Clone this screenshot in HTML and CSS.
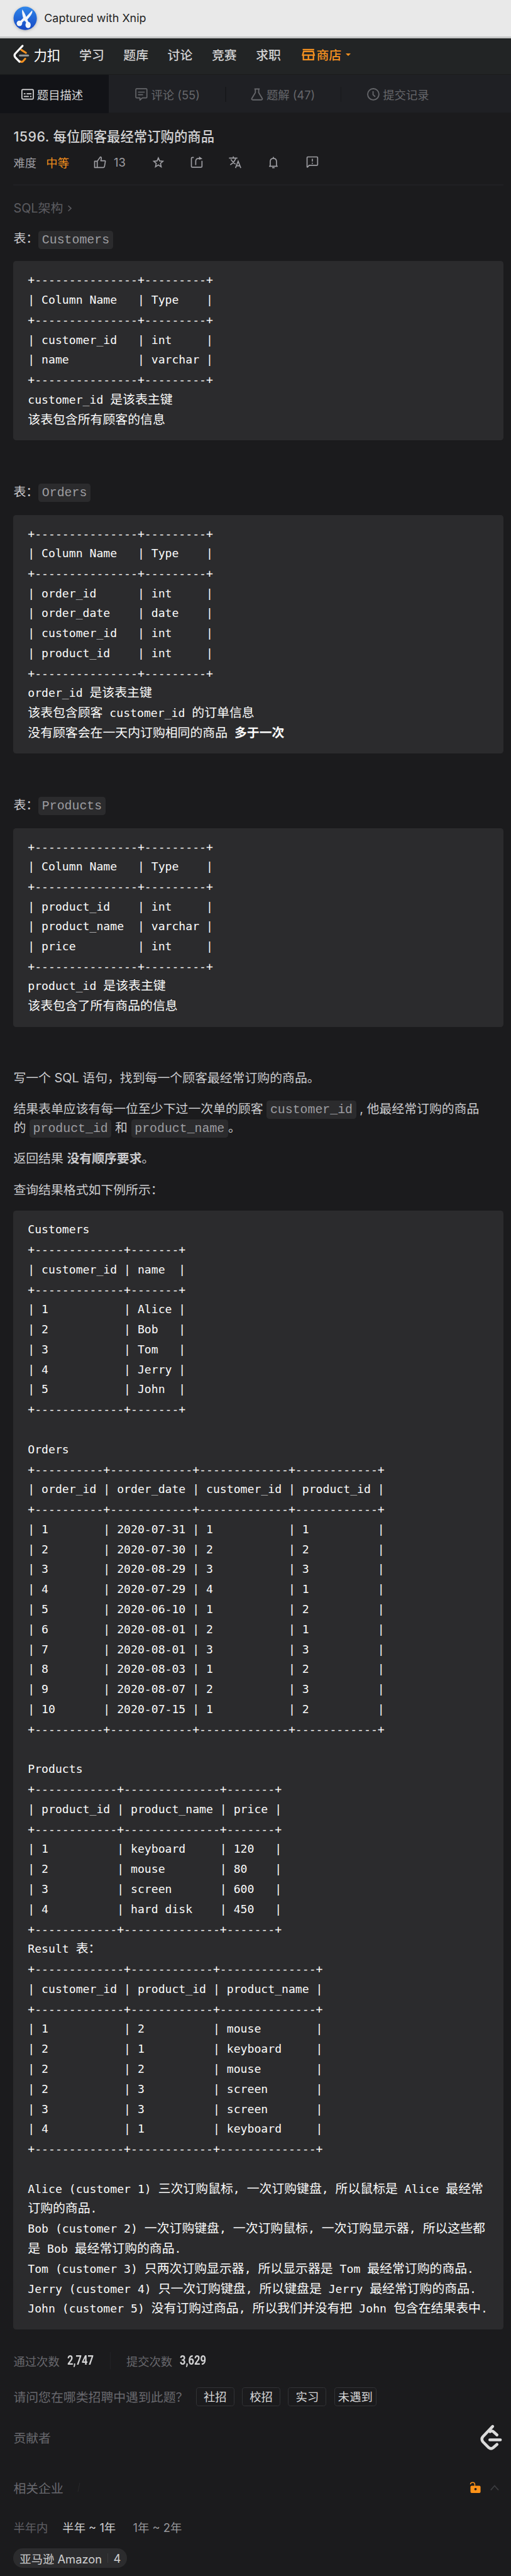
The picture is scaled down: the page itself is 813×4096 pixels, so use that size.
FILE: index.html
```html
<!DOCTYPE html>
<html lang="zh-CN">
<head>
<meta charset="utf-8">
<title>1596. 每位顾客最经常订购的商品 - 力扣</title>
<link rel="stylesheet" href="styles.css">
</head>
<body>
<div class="capture-bar">
  <svg class="capture-icon" viewBox="0 0 50 50">
    <defs><linearGradient id="disc" x1="0" y1="0" x2="0" y2="1"><stop offset="0" stop-color="#2f86ea"/><stop offset="1" stop-color="#1648c4"/></linearGradient></defs>
    <circle cx="25" cy="25" r="24.3" fill="url(#disc)"/>
    <path d="M19 6.500C22 11 25.500 17 27 22L39.500 8.500C41 13 38 18 29.500 27.500L25 32L21.500 27C19.500 20 17.500 12 19 6.500Z" fill="#f2f5fb"/>
    <path d="M24 25L16 33M27 28L30 35" stroke="#f2f5fb" stroke-width="5"/>
    <circle cx="13" cy="35.500" r="5.800" fill="#f2f5fb"/>
    <ellipse cx="31" cy="39" rx="5.500" ry="6.500" fill="#f2f5fb"/>
  </svg>
  <span>Captured with Xnip</span>
</div>

<nav class="site-nav">
  <div class="brand">
    <svg class="brand-mark" viewBox="0 0 34 40">
      <path d="M17 11L26.500 17M14 34.500Q17 37 20 35L25 29.500" fill="none" stroke="#f59120" stroke-width="4.200" stroke-linecap="round" stroke-linejoin="round"/>
      <path d="M14 22.500H31" stroke="#9b9b9b" stroke-width="4" stroke-linecap="round"/>
      <path d="M19.500 2.500L4 19Q1.500 22.500 4 26L13 35.500" fill="none" stroke="#fff" stroke-width="4.200" stroke-linecap="round"/>
    </svg>
    <span class="brand-name">力扣</span>
  </div>
  <a class="nav-link">学习</a>
  <a class="nav-link">题库</a>
  <a class="nav-link">讨论</a>
  <a class="nav-link">竞赛</a>
  <a class="nav-link">求职</a>
  <a class="store">
    <svg class="store-icon" viewBox="0 0 28 26"><path d="M2 2.500H26" stroke="#f59120" stroke-width="3"/><path d="M4 6.500H24L26 14H2ZM3.500 13V23.500H24.500V13M14 14V23" fill="none" stroke="#f59120" stroke-width="3"/></svg>
    <span>商店</span>
    <i class="caret-down"></i>
  </a>
</nav>

<div class="tabs">
  <div class="tab tab-active">
    <svg class="tab-icon" viewBox="0 0 26 26" fill="none" stroke="currentColor" stroke-width="2.200"><rect x="1.100" y="3" width="23.800" height="20" rx="2"/><path d="M5 12H8.500M11 12H21M5 17.500H15.500M18 17.500H21"/></svg>
    <span>题目描述</span>
  </div>
  <div class="tab">
    <svg class="tab-icon" viewBox="0 0 26 26" fill="none" stroke="currentColor" stroke-width="2.200" stroke-linejoin="round"><path d="M1.500 3Q1.500 1.500 3 1.500H23Q24.500 1.500 24.500 3V19Q24.500 20.500 23 20.500H15L10 25V20.500H3Q1.500 20.500 1.500 19ZM6 8.500H20M6 13.800H16.500"/></svg>
    <span>评论 (55)</span>
  </div>
  <div class="tab tab-ruled">
    <svg class="tab-icon" viewBox="0 0 26 26" fill="none" stroke="currentColor" stroke-width="2.400" stroke-linejoin="round"><path d="M7.500 2H18.500M9.500 2V9.500L2 22Q1.500 24.500 4 24.500H22Q24.500 24.500 24 22L16.500 9.500V2"/></svg>
    <span>题解 (47)</span>
  </div>
  <div class="tab tab-ruled">
    <svg class="tab-icon" viewBox="0 0 26 26" fill="none" stroke="currentColor" stroke-width="2.400"><circle cx="13" cy="13" r="11.700"/><path d="M12.500 6.500V14L17 18"/></svg>
    <span>提交记录</span>
  </div>
</div>

<main class="content">
  <h1 class="title"><span class="number">1596.</span> 每位顾客最经常订购的商品</h1>
  <div class="meta">
    <span class="level-label">难度</span>
    <span class="level">中等</span>
    <svg class="meta-icon thumb" viewBox="0 0 26 26" fill="none" stroke="currentColor" stroke-width="2.200" stroke-linejoin="round"><path d="M2 11H7.500V24H2ZM7.500 11L14 2Q16.500 2 16 5L15 10H23.500Q24.500 10 24.300 11.500L22.500 22Q22 24 20.500 24H7.500"/></svg>
    <span class="likes">13</span>
    <span class="actions">
      <svg class="meta-icon" viewBox="0 0 26 26" fill="none" stroke="currentColor" stroke-width="2.200"><path d="M13 4L15.700 10.300L22.500 10.900L17.400 15.400L18.900 22.500L13 18.800L7.100 22.500L8.600 15.400L3.500 10.900L10.300 10.300Z"/></svg>
      <svg class="meta-icon" viewBox="0 0 26 26" fill="none" stroke="currentColor" stroke-width="2.200"><path d="M7 3H4Q2 3 2 5V21.500Q2 23.500 4 23.500H22Q24 23.500 24 21.500V10M11 19V11Q11 5.500 16 5.500H21"/><path d="M18 1L25 6L18 8Z" fill="currentColor" stroke="none"/></svg>
      <svg class="meta-icon" viewBox="0 0 26 26" fill="none" stroke="currentColor" stroke-width="2.200"><path d="M.5 4.500H18M9.500 1V4.500M14.500 4.500Q12 13 3 18.500M4.500 7Q8 13.500 14 17M14 25L19.500 11L25 25M16 20.500H23.500"/></svg>
      <svg class="meta-icon" viewBox="0 0 26 26" fill="none" stroke="currentColor" stroke-width="2.200"><path d="M4 21.500H22M6.500 21V12Q6.500 5 13 5Q19.500 5 19.500 12V21M13 2V5M10.500 24.500H15.500"/></svg>
      <svg class="meta-icon" viewBox="0 0 26 26" fill="none" stroke="currentColor" stroke-width="2.200"><path d="M2 24V3.500Q2 2 3.500 2H22.500Q24 2 24 3.500V18Q24 19.500 22.500 19.500H6.500L2 24M13 6V11.500M13 14V16.500"/></svg>
    </span>
  </div>
  <div class="rule"></div>
  <div class="schema">SQL架构<svg class="chevron" viewBox="0 0 10 14"><path d="M2 1.500L8 7L2 12.500" fill="none" stroke="currentColor" stroke-width="2"/></svg></div>

  <p class="table-name">表：<code>Customers</code></p>
<pre class="block">+---------------+---------+
| Column Name   | Type    |
+---------------+---------+
| customer_id   | int     |
| name          | varchar |
+---------------+---------+
<span class="line">customer_id <b>是该表主键</b></span><span class="line"><b>该表包含所有顾客的信息</b></span></pre>

  <p class="table-name spaced">表：<code>Orders</code></p>
<pre class="block block-orders">+---------------+---------+
| Column Name   | Type    |
+---------------+---------+
| order_id      | int     |
| order_date    | date    |
| customer_id   | int     |
| product_id    | int     |
+---------------+---------+
<span class="line">order_id <b>是该表主键</b></span><span class="line"><b>该表包含顾客</b> customer_id <b>的订单信息</b></span><span class="line"><b>没有顾客会在一天内订购相同的商品</b> <b class="strong">多于一次</b></span></pre>

  <p class="table-name spaced">表：<code>Products</code></p>
<pre class="block block-products">+---------------+---------+
| Column Name   | Type    |
+---------------+---------+
| product_id    | int     |
| product_name  | varchar |
| price         | int     |
+---------------+---------+
<span class="line">product_id <b>是该表主键</b></span><span class="line"><b>该表包含了所有商品的信息</b></span></pre>

  <div class="statement">
    <p>写一个 SQL 语句，找到每一个顾客最经常订购的商品。</p>
    <p>结果表单应该有每一位至少下过一次单的顾客 <code>customer_id</code> , 他最经常订购的商品<br>的 <code>product_id</code> 和 <code>product_name</code>。</p>
    <p>返回结果 <strong>没有顺序要求</strong>。</p>
    <p>查询结果格式如下例所示：</p>
  </div>
<pre class="block block-example">Customers
+-------------+-------+
| customer_id | name  |
+-------------+-------+
| 1           | Alice |
| 2           | Bob   |
| 3           | Tom   |
| 4           | Jerry |
| 5           | John  |
+-------------+-------+

Orders
+----------+------------+-------------+------------+
| order_id | order_date | customer_id | product_id |
+----------+------------+-------------+------------+
| 1        | 2020-07-31 | 1           | 1          |
| 2        | 2020-07-30 | 2           | 2          |
| 3        | 2020-08-29 | 3           | 3          |
| 4        | 2020-07-29 | 4           | 1          |
| 5        | 2020-06-10 | 1           | 2          |
| 6        | 2020-08-01 | 2           | 1          |
| 7        | 2020-08-01 | 3           | 3          |
| 8        | 2020-08-03 | 1           | 2          |
| 9        | 2020-08-07 | 2           | 3          |
| 10       | 2020-07-15 | 1           | 2          |
+----------+------------+-------------+------------+

Products
+------------+--------------+-------+
| product_id | product_name | price |
+------------+--------------+-------+
| 1          | keyboard     | 120   |
| 2          | mouse        | 80    |
| 3          | screen       | 600   |
| 4          | hard disk    | 450   |
+------------+--------------+-------+
<span class="line">Result <b>表：</b></span>+-------------+------------+--------------+
| customer_id | product_id | product_name |
+-------------+------------+--------------+
| 1           | 2          | mouse        |
| 2           | 1          | keyboard     |
| 2           | 2          | mouse        |
| 2           | 3          | screen       |
| 3           | 3          | screen       |
| 4           | 1          | keyboard     |
+-------------+------------+--------------+

<span class="line">Alice (customer 1) <b>三次订购鼠标</b>, <b>一次订购键盘</b>, <b>所以鼠标是</b> Alice <b>最经常</b></span><span class="line"><b>订购的商品</b>.</span><span class="line">Bob (customer 2) <b>一次订购键盘</b>, <b>一次订购鼠标</b>, <b>一次订购显示器</b>, <b>所以这些都</b></span><span class="line"><b>是</b> Bob <b>最经常订购的商品</b>.</span><span class="line">Tom (customer 3) <b>只两次订购显示器</b>, <b>所以显示器是</b> Tom <b>最经常订购的商品</b>.</span><span class="line">Jerry (customer 4) <b>只一次订购键盘</b>, <b>所以键盘是</b> Jerry <b>最经常订购的商品</b>.</span><span class="line">John (customer 5) <b>没有订购过商品</b>, <b>所以我们并没有把</b> John <b>包含在结果表中</b>.</span></pre>

  <div class="stats">
    <span>通过次数</span><span class="count">2,747</span>
    <i class="stats-divider"></i>
    <span>提交次数</span><span class="count">3,629</span>
  </div>
  <div class="survey">
    <span class="survey-text">请问您在哪类招聘中遇到此题？</span>
    <button class="choice">社招</button>
    <button class="choice">校招</button>
    <button class="choice">实习</button>
    <button class="choice choice-wide">未遇到</button>
  </div>
  <div class="contributor">
    <span>贡献者</span>
    <svg class="contributor-mark" viewBox="0 0 46 54" fill="none" stroke="#dcdcdc" stroke-width="6" stroke-linecap="round" stroke-linejoin="round"><path d="M26 4L5.500 25.500Q1.500 30.500 5.500 36L18 48.500Q22.500 52 27 48.500L35 41.500M20.500 15Q24.500 12 28.500 16L35 22M20 32H42"/></svg>
  </div>
  <div class="companies">
    <span>相关企业</span><i class="slash"></i>
    <svg class="lock" viewBox="0 0 24 24"><rect x="2" y="8.500" width="21" height="15" rx="2.500" fill="#ff9218"/><path d="M2 5.500Q2 1.500 6.500 1.500Q11 1.500 11 5.500V9" fill="none" stroke="#ff9218" stroke-width="2"/><circle cx="12.500" cy="15.500" r="2.500" fill="#1b1b1d"/></svg>
    <svg class="fold" viewBox="0 0 18 12"><path d="M1 11L9 2L17 11" fill="none" stroke="#3c3c40" stroke-width="2.200"/></svg>
  </div>
  <div class="periods">
    <span>半年内</span><span class="period-active">半年 ~ 1年</span><span class="period">1年 ~ 2年</span>
  </div>
  <div class="company"><span>亚马逊 Amazon</span><i class="company-divider"></i><span>4</span></div>
</main>
</body>
</html>
```

FILE: styles.css
```css
html { font-size: 7.64px; background: #1b1b1d; }
* { box-sizing: border-box; }
body {
  margin: 0;
  height: 4096px;
  overflow: hidden;
  background: #1b1b1d;
  color: #cbcbce;
  font-family: Inter, "Noto Sans CJK SC", sans-serif;
  font-size: 2.6rem;
}
svg { display: block; flex: none; overflow: visible; }

.capture-bar {
  display: flex;
  align-items: center;
  height: 8rem;
  padding: 0 0 .1rem 2.8rem;
  background: #e9e9e9;
  border-bottom: .4rem solid #c5c6c6;
  color: #1f1f1f;
  font-size: 2.35rem;
}
.capture-icon { width: 5rem; height: 5rem; margin-right: 1.4rem; filter: drop-shadow(0 .2rem .3rem rgba(0, 0, 0, .25)); }

.site-nav {
  display: flex;
  align-items: center;
  height: 7.6rem;
  padding: 0 0 .8rem 2.8rem;
  background: #222425;
  border-bottom: .2rem solid #1a1b1c;
  color: #d2d2d3;
  font-weight: 500;
}
.brand { display: flex; align-items: center; width: 13.7rem; }
.brand-mark { width: 3.4rem; height: 4rem; }
.brand-name { margin-left: .8rem; color: #fff; font-size: 2.8rem; font-weight: 400; }
.nav-link { width: 9.2rem; }
.store { display: flex; align-items: center; margin-left: .3rem; color: #f59120; }
.store-icon { width: 2.8rem; height: 2.6rem; margin-right: .3rem; }
.caret-down { margin-left: .9rem; border: .6rem solid transparent; border-top-color: #f59120; border-bottom: 0; }

.tabs { display: flex; height: 8rem; background: linear-gradient(#1f2024 7.8rem, #1b1b1d 7.8rem); color: #66676b; font-size: 2.4rem; }
.tab { position: relative; display: flex; align-items: center; justify-content: center; width: 24rem; gap: .7rem; }
.tab-active { width: 22.7rem; margin-right: .2rem; padding-right: 1rem; background: #121317; color: #d8d8d9; }
.tab-icon { width: 2.6rem; height: 2.6rem; }
.tab-ruled::before { content: ""; position: absolute; left: 0; top: 2.4rem; width: .2rem; height: 3.2rem; background: #18191c; }

.content { padding: 0 1.6rem 0 2.8rem; }
.title { height: 4rem; margin: 2.8rem 0 0; color: #d2d2d3; font-size: 2.8rem; font-weight: 500; line-height: 4rem; }
.number { letter-spacing: .07rem; }
.meta { display: flex; align-items: center; height: 2.8rem; margin-top: 2rem; color: #9e9ea3; font-size: 2.4rem; }
.level-label { width: 6.8rem; }
.level { width: 9.9rem; color: #f38f1c; }
.meta-icon { width: 2.6rem; height: 2.6rem; }
.likes { width: 8rem; margin-left: 1.6rem; }
.actions { display: flex; gap: 5.4rem; }
.rule { height: .2rem; margin-top: 3.2rem; background: #202024; }
.schema { display: flex; align-items: center; height: 4rem; margin-top: 2.6rem; color: #5b5b60; }
.chevron { width: 1rem; height: 1.4rem; margin: .3rem 0 0 .9rem; }

p { margin: 0; line-height: 3.9rem; white-space: nowrap; }
code {
  display: inline-block;
  height: 3.8rem;
  padding: 0 .75rem;
  border-radius: .6rem;
  background: #2b2b2d;
  color: #9d9da1;
  font: 2.6rem/4rem "Liberation Mono", monospace;
  vertical-align: middle;
}
.table-name { height: 3.9rem; margin-top: 2.65rem; }
.spaced { margin-top: 8.9rem; }

.block {
  margin: 2.65rem 0 0;
  padding: 1.8rem 3rem 2.2rem;
  border-radius: .6rem;
  background: #2b2b2d;
  color: #fbfbfb;
  font: 2.375rem/4.16rem "DejaVu Sans Mono", "Noto Sans CJK SC", monospace;
  white-space: pre;
}
.block b { font: 400 2.6rem/1 "Noto Sans CJK SC", sans-serif; }
.block .strong { font-weight: 700; }
.line { display: block; }
.block-orders { margin-top: 2.75rem; line-height: 4.145rem; }
.block-products { margin-top: 2.75rem; line-height: 4.15rem; }
.block-example { margin-top: 2.36rem; }

.statement { display: flex; flex-direction: column; gap: 2.53rem; margin-top: 8.8rem; }

.stats { display: flex; align-items: center; height: 3.6rem; margin-top: 4.7rem; color: #68686d; font-size: 2.4rem; }
.count {
  width: 5.7rem;
  margin-left: 1.6rem;
  color: #d4d4d5;
  font: 700 2.55rem/1 Roboto, sans-serif;
  transform: scaleX(.85);
  transform-origin: left;
}
.stats-divider { width: .2rem; height: 3.6rem; margin: 0 3.2rem; background: #222226; }
.survey { display: flex; align-items: center; gap: 1.6rem; height: 4rem; margin-top: 3.7rem; color: #68686d; }
.survey-text { width: 36.4rem; white-space: nowrap; }
.choice {
  width: 8rem;
  height: 4rem;
  padding: 0;
  border: .2rem solid #323336;
  border-radius: .6rem;
  background: none;
  color: #d8d8d9;
  font: 2.4rem/1 Inter, "Noto Sans CJK SC", sans-serif;
}
.choice-wide { width: 8.8rem; }
.contributor { display: flex; align-items: center; justify-content: space-between; height: 5.6rem; margin-top: 3.7rem; color: #68686d; }
.contributor-mark { width: 4.6rem; height: 5.4rem; margin-right: .2rem; }
.companies { display: flex; align-items: center; height: 4rem; margin-top: 5.6rem; color: #68686d; }
.slash { width: .15rem; height: 1.8rem; margin-left: 3.2rem; background: #29292c; transform: skewX(-12deg); }
.lock { width: 2.4rem; height: 2.4rem; margin-left: auto; }
.fold { width: 1.8rem; height: 1.2rem; margin: 0 .9rem 0 1.9rem; }
.periods { display: flex; align-items: center; height: 3rem; margin-top: 4.75rem; color: #5f5f64; font-size: 2.4rem; }
.period-active { width: 14.7rem; margin-left: 3rem; color: #d0d0d1; }
.period { color: #97979b; }
.company { display: inline-flex; align-items: center; height: 4rem; margin-top: 2.95rem; padding: 0 1.3rem; border-radius: 2rem; background: #2c2c2e; color: #cfcfd0; font-size: 2.4rem; }
.company-divider { width: .2rem; height: 2rem; margin: 0 1.1rem; background: #3b3b3e; }
```
